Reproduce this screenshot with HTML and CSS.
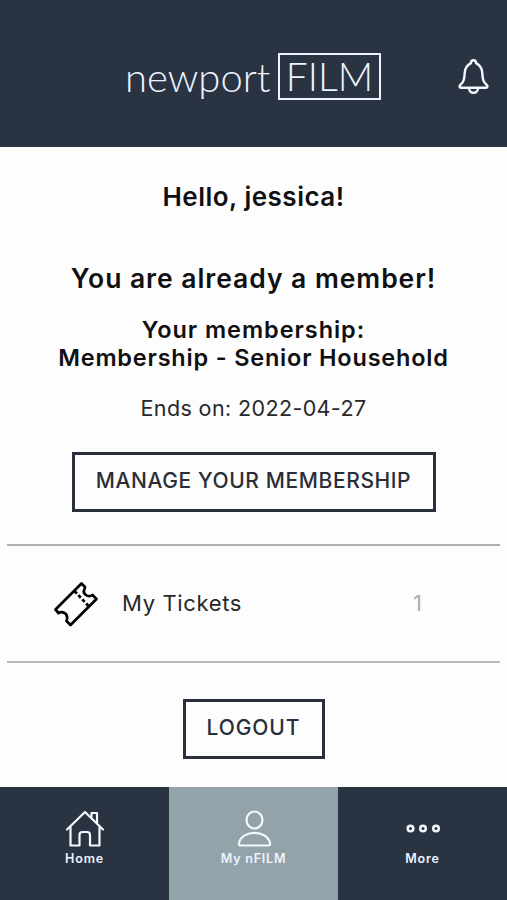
FILE: index.html
```html
<!DOCTYPE html>
<html lang="en">
  <head>
    <meta charset="UTF-8">
    <title>newportFILM</title>
    <link rel="stylesheet" href="styles.css">
  </head>
  <body>
    <header class="header">
      <div class="logo">
        <span class="logo-name">newport</span>
        <span class="logo-box">FILM</span>
      </div>
      <svg class="bell" viewBox="0 0 30 36" fill="none" stroke="#f4f8ff" stroke-width="2.3" stroke-linejoin="round">
        <path d="M3 29 C1 29 1 27 2.3 26 C6 23 6 20 6.5 14 C7 9 9 6.700 12.500 5 C12.500 1.200 17.500 1.200 17.500 5 C21 6.700 23 9 23.500 14 C24 20 24 23 27.700 26 C29 27 29 29 27 29 Z" />
        <path d="M10.500 29 C10.500 35.500 19.500 35.500 19.500 29" />
      </svg>
    </header>

    <main class="content">
      <h1 class="hello">Hello, jessica!</h1>
      <h2 class="status">You are already a member!</h2>
      <div class="plan">
        <h3 class="plan-label">Your membership:</h3>
        <h3 class="plan-name">Membership - Senior Household</h3>
      </div>
      <p class="ends">Ends on: 2022-04-27</p>
      <button class="button manage">MANAGE YOUR MEMBERSHIP</button>

      <div class="tickets">
        <svg class="ticket-icon" viewBox="0 0 46 46" fill="none" stroke="#000" stroke-width="2.700" stroke-linejoin="round">
          <path d="M28.500 2.500 L2.500 28.500 L5.500 32 C9 30 15 32 14 38 L13.500 40 L17.500 44 L43.500 18 L39.500 14 C35 17 29 13 31.500 8 L32 6 Z" />
          <path d="M21.500 10 L35.500 25" stroke-dasharray="3.500 2.200" />
        </svg>
        <span class="tickets-label">My Tickets</span>
        <span class="tickets-count">1</span>
      </div>

      <button class="button logout">LOGOUT</button>
    </main>

    <nav class="tabs">
      <a class="tab">
        <svg class="tab-icon" viewBox="0 0 40 38" fill="none" stroke="#f4f8ff" stroke-width="2.200" stroke-linejoin="round" stroke-linecap="round">
          <path d="M2 19.500 L20 2 L38 19.500" />
          <path d="M26.500 7 V3 H32 V13" />
          <path d="M5.500 17 V35.500 H14.500 V25 Q14.500 22 17.500 22 H22 Q25 22 25 25 V35.500 H34.500 V17" />
        </svg>
        <span class="tab-label">Home</span>
      </a>
      <a class="tab active">
        <svg class="tab-icon" viewBox="0 0 40 38" fill="none" stroke="#f4f8ff" stroke-width="2.200" stroke-linejoin="round">
          <ellipse cx="20.500" cy="10" rx="8" ry="8.500" />
          <path d="M6.500 35.500 Q4.500 35.500 5 33 C8 19.500 33 19.500 36 33 Q36.500 35.500 34.500 35.500 Z" />
        </svg>
        <span class="tab-label">My nFILM</span>
      </a>
      <a class="tab">
        <svg class="tab-icon" viewBox="0 0 40 38" fill="none" stroke="#f4f8ff" stroke-width="2.500">
          <circle cx="7.500" cy="18.500" r="2.800" />
          <circle cx="20" cy="18.500" r="2.800" />
          <circle cx="33" cy="18.500" r="2.800" />
        </svg>
        <span class="tab-label">More</span>
      </a>
    </nav>
  </body>
</html>
```
FILE: styles.css
```css
* {
  box-sizing: border-box;
}

body {
  margin: 0;
  height: 900px;
  display: flex;
  flex-direction: column;
  background-color: #fdfdfd;
  color: #101012;
  font-family: Inter, "Liberation Sans", sans-serif;
  overflow: hidden;
}

h1, h2, h3, p {
  margin: 0;
  white-space: nowrap;
}

.header {
  height: 147px;
  flex: none;
  display: flex;
  align-items: center;
  justify-content: space-between;
  padding: 6px 18px 0 125px;
  background-color: #2a3342;
  color: #edf3ff;
}

/* wordmark */
.logo {
  display: flex;
  align-items: center;
  width: 256px;
  justify-content: space-between;
  font-family: Lato, sans-serif;
  font-weight: 300;
  white-space: nowrap;
}

.logo-name {
  font-size: 40px;
  line-height: 46px;
}

.logo-box {
  width: 103px;
  height: 47px;
  border: 2px solid #edf3ff;
  font-size: 39px;
  line-height: 43px;
  text-align: center;
}

.bell {
  width: 31px;
  height: 37px;
}

.content {
  height: 640px;
  flex: none;
  display: flex;
  flex-direction: column;
  align-items: center;
  padding: 34px 7px 0;
}

.hello {
  font-size: 26px;
  line-height: 32px;
  font-weight: 600;
  letter-spacing: 0.5px;
}

.status {
  margin-top: 49px;
  font-size: 26.5px;
  line-height: 32px;
  font-weight: 600;
  letter-spacing: 0.95px;
}

.plan {
  margin-top: 22px;
  text-align: center;
}

.plan-label,
.plan-name {
  font-size: 23.5px;
  line-height: 28px;
  font-weight: 600;
  letter-spacing: 0.95px;
}

.plan-name {
  letter-spacing: 0.8px;
}

.ends {
  margin-top: 22px;
  font-size: 21.5px;
  line-height: 28px;
  letter-spacing: 0.38px;
  color: #28282a;
}

.button {
  height: 60px;
  padding: 0 0 4px;
  border: 3px solid #2a2f3c;
  background: none;
  color: #2a2e38;
  font-family: inherit;
  font-size: 21px;
  font-weight: 500;
  letter-spacing: 0.6px;
  white-space: nowrap;
}

.manage {
  width: 364px;
  margin-top: 30px;
}

.tickets {
  width: 493px;
  height: 119px;
  margin-top: 32px;
  padding: 0 78px 0 46px;
  display: flex;
  align-items: center;
  border-top: 2px solid #adafb0;
  border-bottom: 2px solid #b8babb;
}

.ticket-icon {
  width: 46px;
  height: 46px;
}

.tickets-label {
  margin: 0 0 2px 23px;
  font-size: 22px;
  letter-spacing: 0.65px;
  color: #28282a;
}

.tickets-count {
  margin: 0 0 2px auto;
  font-size: 22px;
  color: #adadaf;
}

.logout {
  width: 142px;
  margin-top: 36px;
  letter-spacing: 0.9px;
}

.tabs {
  height: 113px;
  flex: none;
  display: grid;
  grid-template-columns: 1fr 1fr 1fr;
  background-color: #2a3342;
}

.tab {
  display: flex;
  flex-direction: column;
  align-items: center;
  padding-top: 23px;
  color: #edf3ff;
}

.tab.active {
  background-color: #93a3aa;
}

.tab-icon {
  width: 40px;
  height: 38px;
}

.tab-label {
  margin-top: 3px;
  font-size: 12.5px;
  line-height: 16px;
  font-weight: 600;
  letter-spacing: 0.8px;
}
```
